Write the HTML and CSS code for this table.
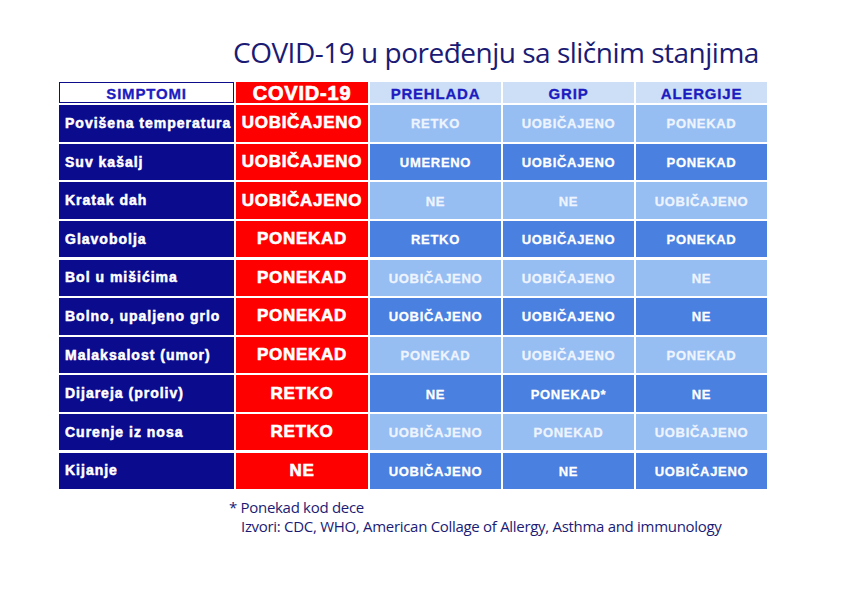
FILE: index.html
```html
<!DOCTYPE html>
<html lang="sr">
<head>
<meta charset="utf-8">
<title>COVID-19 u poređenju sa sličnim stanjima</title>
<link rel="stylesheet" href="styles.css">
</head>
<body>
<div class="page">
  <h1 class="title">COVID-19 u poređenju sa sličnim stanjima</h1>
  <div class="table">
    <div class="hd hd-sym">SIMPTOMI</div>
    <div class="hd hd-covid">COVID-19</div>
    <div class="hd">PREHLADA</div>
    <div class="hd">GRIP</div>
    <div class="hd">ALERGIJE</div>

    <div class="sym">Povišena temperatura</div>
    <div class="cv">UOBIČAJENO</div>
    <div class="c lt">RETKO</div>
    <div class="c lt">UOBIČAJENO</div>
    <div class="c lt">PONEKAD</div>

    <div class="sym">Suv kašalj</div>
    <div class="cv">UOBIČAJENO</div>
    <div class="c md">UMERENO</div>
    <div class="c md">UOBIČAJENO</div>
    <div class="c md">PONEKAD</div>

    <div class="sym">Kratak dah</div>
    <div class="cv">UOBIČAJENO</div>
    <div class="c lt">NE</div>
    <div class="c lt">NE</div>
    <div class="c lt">UOBIČAJENO</div>

    <div class="sym">Glavobolja</div>
    <div class="cv">PONEKAD</div>
    <div class="c md">RETKO</div>
    <div class="c md">UOBIČAJENO</div>
    <div class="c md">PONEKAD</div>

    <div class="sym">Bol u mišićima</div>
    <div class="cv">PONEKAD</div>
    <div class="c lt">UOBIČAJENO</div>
    <div class="c lt">UOBIČAJENO</div>
    <div class="c lt">NE</div>

    <div class="sym">Bolno, upaljeno grlo</div>
    <div class="cv">PONEKAD</div>
    <div class="c md">UOBIČAJENO</div>
    <div class="c md">UOBIČAJENO</div>
    <div class="c md">NE</div>

    <div class="sym">Malaksalost (umor)</div>
    <div class="cv">PONEKAD</div>
    <div class="c lt">PONEKAD</div>
    <div class="c lt">UOBIČAJENO</div>
    <div class="c lt">PONEKAD</div>

    <div class="sym">Dijareja (proliv)</div>
    <div class="cv">RETKO</div>
    <div class="c md">NE</div>
    <div class="c md">PONEKAD*</div>
    <div class="c md">NE</div>

    <div class="sym">Curenje iz nosa</div>
    <div class="cv">RETKO</div>
    <div class="c lt">UOBIČAJENO</div>
    <div class="c lt">PONEKAD</div>
    <div class="c lt">UOBIČAJENO</div>

    <div class="sym">Kijanje</div>
    <div class="cv">NE</div>
    <div class="c md">UOBIČAJENO</div>
    <div class="c md">NE</div>
    <div class="c md">UOBIČAJENO</div>
  </div>
  <div class="notes">
    <p class="note">* Ponekad kod dece</p>
    <p class="note src">Izvori: CDC, WHO, American Collage of Allergy, Asthma and immunology</p>
  </div>
</div>
</body>
</html>
```
FILE: styles.css
```css
html, body {
  margin: 0;
  padding: 0;
  background: #ffffff;
}
.page {
  width: 842px;
  height: 595px;
  overflow: hidden;
}
.title {
  margin: 34px 0 0 233px;
  font-family: "Open Sans", "Noto Sans", sans-serif;
  font-weight: 400;
  font-size: 28px;
  line-height: 36px;
  letter-spacing: -0.5px;
  color: #1b1b74;
  white-space: nowrap;
}
.table {
  margin: 12px 0 0 59px;
  display: grid;
  grid-template-columns: 175px 132px 131px 131px 131px;
  grid-template-rows: 21px repeat(10, 36.3px);
  column-gap: 2px;
  row-gap: 2.3px;
  width: 708px;
  font-family: "Liberation Sans", Arial, sans-serif;
  font-weight: 700;
}
.hd {
  background: #cddff6;
  color: #1c1cc0;
  font-size: 15px;
  letter-spacing: 0.8px;
  -webkit-text-stroke: 0.3px #1c1cc0;
  display: flex;
  align-items: center;
  justify-content: center;
  padding-top: 1px;
}
.hd-sym {
  background: #ffffff;
  border: 1px solid #0d0d8c;
  font-size: 15px;
  box-sizing: border-box;
}
.hd-covid {
  background: #ff0000;
  color: #ffffff;
  font-size: 20px;
  -webkit-text-stroke: 0.7px #ffffff;
  letter-spacing: 0.8px;
}
.sym {
  background: #0b0b8e;
  color: #ffffff;
  font-size: 14px;
  letter-spacing: 1px;
  -webkit-text-stroke: 0.5px #ffffff;
  display: flex;
  align-items: center;
  padding: 0 0 1px 6px;
  white-space: nowrap;
}
.cv {
  background: #ff0000;
  color: #ffffff;
  font-size: 17px;
  letter-spacing: 0.7px;
  -webkit-text-stroke: 0.6px #ffffff;
  display: flex;
  align-items: center;
  justify-content: center;
  white-space: nowrap;
}
.c {
  font-size: 13px;
  letter-spacing: 0.7px;
  display: flex;
  align-items: center;
  justify-content: center;
  padding-top: 1px;
  white-space: nowrap;
}
.lt {
  background: #97bef2;
  color: #eef4ff;
  -webkit-text-stroke: 0.3px #eef4ff;
}
.md {
  background: #4a80e0;
  color: #ffffff;
  -webkit-text-stroke: 0.3px #ffffff;
}
.notes {
  margin: 9px 0 0 229px;
  font-family: "Open Sans", "Noto Sans", sans-serif;
  font-size: 15px;
  color: #1b1b74;
  letter-spacing: -0.3px;
}
.note {
  margin: 0;
  line-height: 19px;
}
.src {
  padding-left: 12px;
}
```
